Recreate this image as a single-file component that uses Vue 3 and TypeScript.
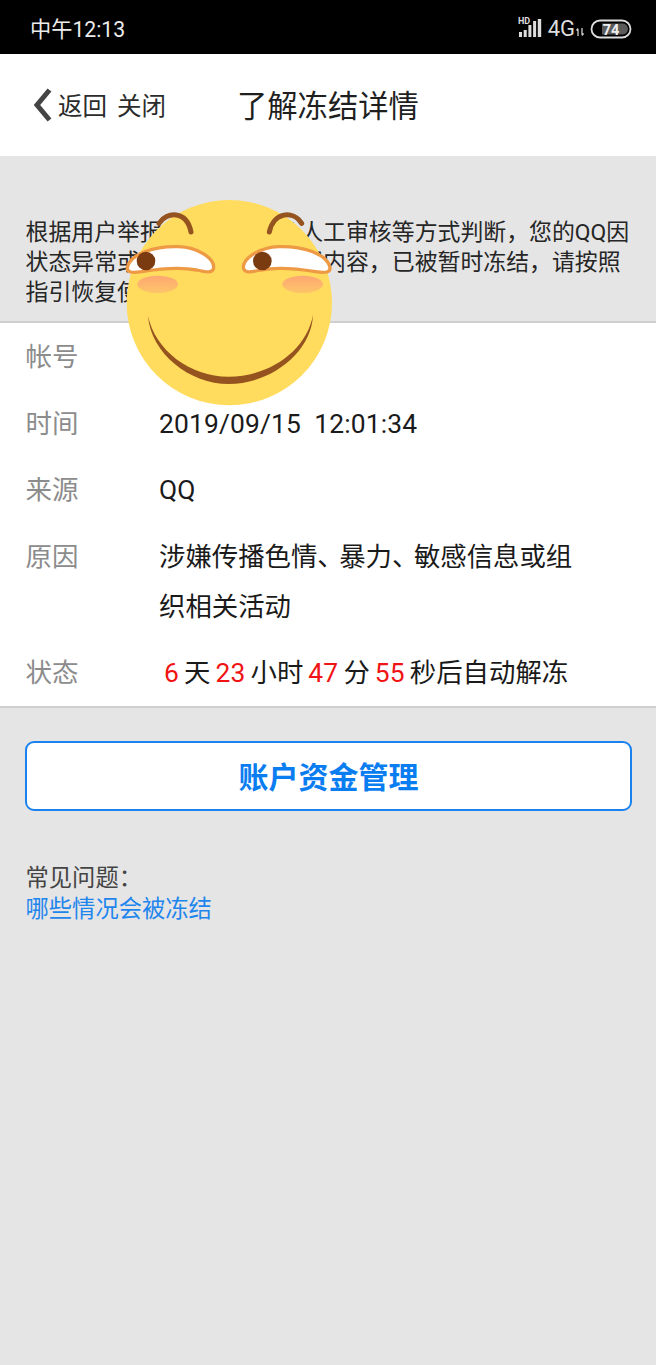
<script setup lang="ts">
interface Row { label: string; lines: string[]; wide?: boolean }
const rows: Row[] = [
  { label: '帐号', lines: [''] },
  { label: '时间', lines: ['2019/09/15  12:01:34'], wide: true },
  { label: '来源', lines: ['QQ'] },
  { label: '原因', lines: ['涉嫌传播色情、暴力、敏感信息或组', '织相关活动'] },
]
const countdown = [
  { n: '6', u: '天' },
  { n: '23', u: '小时' },
  { n: '47', u: '分' },
  { n: '55', u: '秒后自动解冻' },
]
const parts = (s: string): string[] => s.split(/(、)/)
</script>

<template>
  <div class="page">
    <header class="status">
      <span class="clock">中午12:13</span>
      <div class="sys">
        <svg class="signal" width="27" height="22" viewBox="0 0 27 22">
          <text x="0" y="8" class="hd">HD</text>
          <rect x="1" y="16" width="3" height="5" fill="#ddd" />
          <rect x="5.700" y="14" width="3" height="7" fill="#ddd" />
          <rect x="10.400" y="9" width="3" height="12" fill="#ddd" />
          <rect x="15.100" y="5" width="3" height="16" fill="#ddd" />
          <rect x="19.800" y="3" width="3.400" height="18" fill="#ddd" />
        </svg>
        <span class="net">4G</span>
        <svg class="arrows" width="8" height="10" viewBox="0 0 8 10">
          <path d="M2 9V2M0.500 3.500L2 1.500M6 1v7M6 8.500L7.500 6.500" stroke="#ccc" stroke-width="1.300" fill="none" />
        </svg>
        <svg class="battery" width="42" height="20" viewBox="0 0 42 20">
          <rect x="1.500" y="1.500" width="39" height="17" rx="8.500" fill="none" stroke="#ddd" stroke-width="1.800" />
          <path d="M12 4.500h21a5.500 5.500 0 0 1 5 5.500a5.500 5.500 0 0 1-5 5.500H12z" fill="#5a5a5a" />
          <text x="21" y="15.500" class="level">74</text>
        </svg>
      </div>
    </header>

    <nav class="nav">
      <svg class="chev" width="20" height="34" viewBox="0 0 20 34">
        <path d="M17.500 2L5 17l12.500 15" fill="none" stroke="#444" stroke-width="5" />
      </svg>
      <span class="back">返回</span>
      <span class="close">关闭</span>
      <h1 class="title">了解冻结详情</h1>
    </nav>

    <p class="intro">根据用户举报，结合系统及人工审核等方式判断，您的QQ因状态异常或涉嫌发布违法违规内容，已被暂时冻结，请按照指引恢复使用。</p>

    <section class="card">
      <div v-for="r in rows" :key="r.label" class="row">
        <span class="label">{{ r.label }}</span>
        <div class="value" :class="{ wide: r.wide }">
          <div v-for="(l, i) in r.lines" :key="i" class="line"><span v-for="(p, j) in parts(l)" :key="j" :class="{ dun: p === '、' }">{{ p }}</span></div>
        </div>
      </div>
      <div class="row">
        <span class="label">状态</span>
        <div class="value count">
          <template v-for="c in countdown" :key="c.n"><em>{{ c.n }}</em><span>{{ c.u }}</span></template>
        </div>
      </div>
    </section>

    <button class="fund" type="button">账户资金管理</button>

    <div class="faq">
      <div class="faq-title">常见问题：</div>
      <a class="faq-link">哪些情况会被冻结</a>
    </div>

    <svg class="sticker" width="240" height="225" viewBox="0 0 720 675">
      <defs>
        <linearGradient id="blush" x1="0" y1="0" x2="0" y2="1">
          <stop offset="0" stop-color="#fda673" />
          <stop offset="1" stop-color="#fdc568" />
        </linearGradient>
      </defs>
      <circle cx="358" cy="338" r="308" fill="#ffdc5e" />
      <path d="M147 100C170 64 230 60 243 126" fill="none" stroke="#95531f" stroke-width="15" stroke-linecap="round" />
      <path d="M478 126C490 66 550 60 575 100" fill="none" stroke="#95531f" stroke-width="15" stroke-linecap="round" />
      <path d="M52 232C62 190 135 168 205 170C265 172 312 205 311 232C310 250 290 247 260 240C210 230 150 236 95 245C65 250 50 247 52 232Z" fill="#fff" stroke="#ee9a45" stroke-width="10" />
      <circle cx="108" cy="213" r="28" fill="#7a3b10" />
      <path d="M400 232C400 205 447 172 507 170C577 168 650 190 660 232C662 247 647 250 617 245C562 236 502 230 452 240C422 247 402 250 400 232Z" fill="#fff" stroke="#ee9a45" stroke-width="10" />
      <circle cx="457" cy="213" r="28" fill="#7a3b10" />
      <ellipse cx="143" cy="283" rx="61" ry="26" fill="url(#blush)" />
      <ellipse cx="578" cy="283" rx="61" ry="26" fill="url(#blush)" />
      <path d="M114 377C122 490 240 582 356 582C480 582 604 490 609 375C590 480 480 560 356 560C240 560 135 480 114 377Z" fill="#95531f" />
    </svg>
  </div>
</template>

<style>
html, body { margin: 0; background: #e5e5e5; }
</style>

<style scoped>
.page {
  position: relative;
  width: 656px;
  height: 1365px;
  overflow: hidden;
  background: #e5e5e5;
  font-family: Roboto, "Noto Sans CJK SC", sans-serif;
  color: #1a1a1a;
}
.status {
  height: 54px;
  box-sizing: border-box;
  background: #000;
  display: flex;
  align-items: center;
  justify-content: space-between;
  padding: 4px 24px 4px 30px;
}
.clock { color: #ececec; font-size: 21.200px; }
.sys { display: flex; align-items: center; margin-top: 3px; }
.signal { margin-right: 3px; margin-top: -3px; }
.hd { font: 700 9px Roboto, sans-serif; fill: #ddd; }
.net { color: #ddd; font-size: 22px; }
.arrows { margin: 6px 6px 0 1px; }
.level { font: 700 14.500px Roboto, sans-serif; fill: #eee; text-anchor: middle; }
.nav {
  height: 102px;
  background: #fff;
  display: flex;
  align-items: center;
  padding-left: 32px;
}
.chev { flex: none; margin-right: 6px; }
.back, .close { font-size: 24.500px; color: #2b2b2b; margin-top: -2px; }
.back { margin-right: 10px; }
.title { margin: -3px 0 0 71px; font-size: 30.300px; font-weight: 400; color: #1f1f1f; }
.intro {
  margin: 0;
  padding: 62px 20px 13px 25.500px;
  font-size: 22.900px;
  line-height: 30px;
  color: #262626;
}
.card {
  background: #fff;
  border-top: 2px solid #cfcfcf;
  border-bottom: 2px solid #cfcfcf;
  padding: 1px 25.500px 0;
}
.row { display: flex; padding: 8.250px 0; }
.row:last-child { padding-bottom: 7.250px; }
.label { width: 133.500px; flex: none; font-size: 26.500px; line-height: 50px; color: #8c8c8c; }
.value { font-size: 26.400px; line-height: 50px; color: #1a1a1a; white-space: pre; }
.wide { letter-spacing: 0.150px; }
.line { height: 50px; }
.dun { letter-spacing: -4.500px; }
.count { padding-left: 5px; }
.count em { font-style: normal; color: #f01414; margin-right: 5px; letter-spacing: 0.200px; }
.count span { margin-right: 5px; }
.fund {
  display: block;
  box-sizing: border-box;
  width: 607px;
  height: 70px;
  margin: 33px 0 0 25px;
  border: 2px solid #1a82ee;
  border-radius: 9px;
  background: #fff;
  color: #0a7df0;
  font: 700 30px Roboto, "Noto Sans CJK SC", sans-serif;
  padding: 0 0 2px;
}
.faq { margin: 52px 0 0 25.500px; font-size: 23.300px; line-height: 31px; }
.faq-title { color: #444; }
.faq-link { color: #1f86ee; }
.sticker { position: absolute; left: 110px; top: 190px; }
</style>
